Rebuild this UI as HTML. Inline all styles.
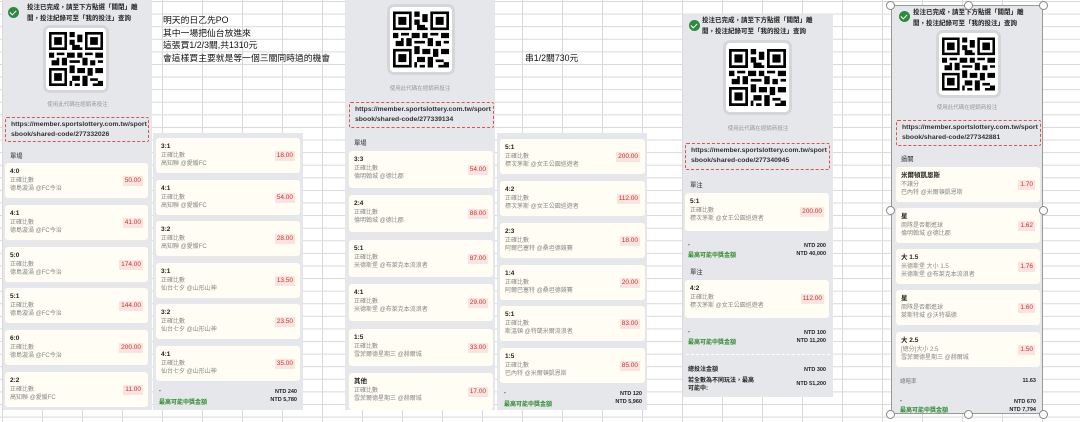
<!DOCTYPE html>
<html><head><meta charset="utf-8"><style>
*{margin:0;padding:0;box-sizing:border-box}
body{width:1080px;height:422px;overflow:hidden;position:relative;font-family:"Liberation Sans","Noto Sans CJK TC",sans-serif;background-color:#fff;
background-image:linear-gradient(90deg,#d9d9d9 1px,transparent 1px),linear-gradient(#d9d9d9 1px,transparent 1px);
background-size:40px 12.6px;background-position:2px 1px}
.p{position:absolute;background:#e6e7ea}
.c{position:absolute;background:#fffdf4;border-radius:3px;padding:5px 0 0 5px;font-size:6px;line-height:8.6px;color:#888}
.c b{display:block;color:#222;font-size:6.5px}
.c i{display:block;font-style:normal}
.c s{position:absolute;right:5px;top:50%;margin-top:-5px;text-decoration:none;background:#fbe3e1;color:#c0392b;font-size:6.5px;padding:1px 2px;line-height:8px}
.t{position:absolute;font-size:6.3px;color:#333}
.g{position:absolute;font-size:6px;color:#2e8b2e;font-weight:bold}
.n{position:absolute;font-size:5.5px;color:#222;font-weight:bold;text-align:right;line-height:7.5px}
.lk{position:absolute;border:1px dashed #d9534f;border-radius:2px;font-size:6.8px;font-weight:bold;color:#333;line-height:10px;padding:2px 5px;white-space:nowrap;overflow:hidden}
.hd{position:absolute;font-size:6.5px;font-weight:bold;color:#222;line-height:10.5px}
.ck{position:absolute;width:11px;height:11px;border-radius:50%;background:#2e8b3e}
.ck:after{content:"";position:absolute;left:3px;top:2px;width:3px;height:5px;border:solid #fff;border-width:0 1.5px 1.5px 0;transform:rotate(45deg)}
.qb{position:absolute;background:#fff;border:3px solid #d5d6da;border-radius:7px;padding:3px}
.qb svg{width:100%;height:100%;display:block}
.u{position:absolute;font-size:5.5px;color:#999;text-align:center}
.txt{position:absolute;font-size:8.8px;color:#111;line-height:12.6px}
.h{position:absolute;width:9px;height:9px;border-radius:50%;background:#fff;border:1px solid #888}
</style></head><body>
<svg width="0" height="0" style="position:absolute"><defs><symbol id="q" viewBox="0 0 21 21">
<path d="M0 0h7v7H0zM1 1v5h5V1zM2 2h3v3H2zM14 0h7v7h-7zM15 1v5h5V1zM16 2h3v3h-3zM0 14h7v7H0zM1 15v5h5v-5zM2 16h3v3H2z" fill-rule="evenodd"/>
<path d="M8 0h2v2H8zM11 1h2v3h-2zM8 3h2v2H8zM9 5h3v2H9zM0 8h2v2H0zM3 8h3v1H3zM7 8h3v2H7zM11 8h2v2h-2zM14 8h3v1h-3zM18 8h3v2h-3zM1 11h3v2H1zM5 10h2v3H5zM8 11h4v1H8zM13 10h2v3h-2zM16 11h2v2h-2zM19 11h2v1h-2zM8 13h2v3H8zM11 14h3v2h-3zM15 14h2v3h-2zM18 14h3v2h-3zM9 17h3v2H9zM13 17h2v4h-2zM16 18h3v1h-3zM19 19h2v2h-2zM8 19h1v2H8zM10 20h2v1h-2zM17 20h2v1h-2zM3 10h1v1H3zM12 6h1v1h-1z"/>
</symbol></defs></svg>

<div class="txt" style="left:163px;top:14px">明天的日乙先PO<br>其中一場把仙台放進來<br>這張買1/2/3關,共1310元<br>會這樣買主要就是等一個三關同時過的機會</div>
<div class="txt" style="left:525px;top:52px">串1/2關730元</div>

<div class="p" style="left:3px;top:0;width:149px;height:410px"></div>
<div class="ck" style="left:8px;top:7px"></div>
<div class="hd" style="left:27px;top:3px">投注已完成，請至下方點選「關閉」離<br>開，投注紀錄可至「我的投注」查詢</div>
<div class="qb" style="left:43px;top:25px;width:66px;height:68px"><svg><use href="#q"/></svg></div>
<div class="u" style="left:3px;top:100px;width:149px">使用此代碼在經銷商投注</div>
<div class="lk" style="left:5px;top:117px;width:144px;height:25px">https://member.sportslottery.com.tw/sport<br>sbook/shared-code/277332026</div>
<div class="t" style="left:10px;top:151px">單場</div>
<div class="c" style="left:5px;top:163px;width:143px;height:35px"><b>4:0</b><i>正確比數</i><i>德島漩渦 @FC今治</i><s>50.00</s></div>
<div class="c" style="left:5px;top:205px;width:143px;height:35px"><b>4:1</b><i>正確比數</i><i>德島漩渦 @FC今治</i><s>41.00</s></div>
<div class="c" style="left:5px;top:247px;width:143px;height:35px"><b>5:0</b><i>正確比數</i><i>德島漩渦 @FC今治</i><s>174.00</s></div>
<div class="c" style="left:5px;top:288px;width:143px;height:35px"><b>5:1</b><i>正確比數</i><i>德島漩渦 @FC今治</i><s>144.00</s></div>
<div class="c" style="left:5px;top:330px;width:143px;height:35px"><b>6:0</b><i>正確比數</i><i>德島漩渦 @FC今治</i><s>200.00</s></div>
<div class="c" style="left:5px;top:372px;width:143px;height:35px"><b>2:2</b><i>正確比數</i><i>高知聯 @愛媛FC</i><s>11.00</s></div>

<div class="p" style="left:153px;top:133px;width:150px;height:277px"></div>
<div class="c" style="left:156px;top:138px;width:144px;height:35px"><b>3:1</b><i>正確比數</i><i>高知聯 @愛媛FC</i><s>18.00</s></div>
<div class="c" style="left:156px;top:180px;width:144px;height:35px"><b>4:1</b><i>正確比數</i><i>高知聯 @愛媛FC</i><s>54.00</s></div>
<div class="c" style="left:156px;top:221px;width:144px;height:35px"><b>3:2</b><i>正確比數</i><i>高知聯 @愛媛FC</i><s>28.00</s></div>
<div class="c" style="left:156px;top:263px;width:144px;height:35px"><b>3:1</b><i>正確比數</i><i>仙台七夕 @山形山神</i><s>13.50</s></div>
<div class="c" style="left:156px;top:304px;width:144px;height:35px"><b>3:2</b><i>正確比數</i><i>仙台七夕 @山形山神</i><s>23.50</s></div>
<div class="c" style="left:156px;top:346px;width:144px;height:35px"><b>4:1</b><i>正確比數</i><i>仙台七夕 @山形山神</i><s>35.00</s></div>
<div class="n" style="left:159px;top:388px;text-align:left">-</div>
<div class="g" style="left:159px;top:397px">最高可能中獎金額</div>
<div class="n" style="left:240px;top:389px;width:57px">NTD 240<br>NTD 5,780</div>

<div class="p" style="left:345px;top:0;width:150px;height:410px"></div>
<div class="qb" style="left:387px;top:4px;width:68px;height:71px"><svg><use href="#q"/></svg></div>
<div class="u" style="left:345px;top:84px;width:150px">使用此代碼在經銷商投注</div>
<div class="lk" style="left:349px;top:102px;width:145px;height:26px">https://member.sportslottery.com.tw/sport<br>sbook/shared-code/277339134</div>
<div class="t" style="left:354px;top:138px">單場</div>
<div class="c" style="left:349px;top:151px;width:144px;height:37px"><b>3:3</b><i>正確比數</i><i>倫明翰城 @德比郡</i><s>54.00</s></div>
<div class="c" style="left:349px;top:195px;width:144px;height:37px"><b>2:4</b><i>正確比數</i><i>倫明翰城 @德比郡</i><s>88.00</s></div>
<div class="c" style="left:349px;top:240px;width:144px;height:37px"><b>5:1</b><i>正確比數</i><i>米德斯堡 @布萊克本流浪者</i><s>87.00</s></div>
<div class="c" style="left:349px;top:284px;width:144px;height:37px"><b>4:1</b><i>正確比數</i><i>米德斯堡 @布萊克本流浪者</i><s>29.00</s></div>
<div class="c" style="left:349px;top:329px;width:144px;height:37px"><b>1:5</b><i>正確比數</i><i>雪菲爾德星期三 @赫爾城</i><s>33.00</s></div>
<div class="c" style="left:349px;top:373px;width:144px;height:37px"><b>其他</b><i>正確比數</i><i>雪菲爾德星期三 @赫爾城</i><s>17.00</s></div>

<div class="p" style="left:497px;top:133px;width:150px;height:277px"></div>
<div class="c" style="left:500px;top:139px;width:145px;height:35px"><b>5:1</b><i>正確比數</i><i>標次茅斯 @女王公園巡遊者</i><s>200.00</s></div>
<div class="c" style="left:500px;top:181px;width:145px;height:35px"><b>4:2</b><i>正確比數</i><i>標次茅斯 @女王公園巡遊者</i><s>112.00</s></div>
<div class="c" style="left:500px;top:223px;width:145px;height:35px"><b>2:3</b><i>正確比數</i><i>阿爾巴塞特 @桑坦德競賽</i><s>18.00</s></div>
<div class="c" style="left:500px;top:265px;width:145px;height:35px"><b>1:4</b><i>正確比數</i><i>阿爾巴塞特 @桑坦德競賽</i><s>20.00</s></div>
<div class="c" style="left:500px;top:306px;width:145px;height:35px"><b>5:1</b><i>正確比數</i><i>斯溫頓 @特蘭米爾流浪者</i><s>83.00</s></div>
<div class="c" style="left:500px;top:348px;width:145px;height:35px"><b>1:5</b><i>正確比數</i><i>巴內特 @米爾頓凱恩斯</i><s>85.00</s></div>
<div class="n" style="left:504px;top:390px;text-align:left">-</div>
<div class="g" style="left:504px;top:399px">最高可能中獎金額</div>
<div class="n" style="left:584px;top:391px;width:58px">NTD 120<br>NTD 5,960</div>

<div class="p" style="left:683px;top:14px;width:150px;height:383px"></div>
<div class="ck" style="left:689px;top:20px"></div>
<div class="hd" style="left:702px;top:16px">投注已完成，請至下方點選「關閉」離<br>開，投注紀錄可至「我的投注」查詢</div>
<div class="qb" style="left:723px;top:40px;width:69px;height:75px"><svg><use href="#q"/></svg></div>
<div class="u" style="left:683px;top:124px;width:150px">使用此代碼在經銷商投注</div>
<div class="lk" style="left:685px;top:143px;width:145px;height:27px">https://member.sportslottery.com.tw/sport<br>sbook/shared-code/277340945</div>
<div class="t" style="left:690px;top:180px">單注</div>
<div class="c" style="left:685px;top:193px;width:144px;height:38px"><b>5:1</b><i>正確比數</i><i>標次茅斯 @女王公園巡遊者</i><s>200.00</s></div>
<div class="n" style="left:688px;top:242px;text-align:left">-</div>
<div class="g" style="left:688px;top:250px">最高可能中獎金額</div>
<div class="n" style="left:765px;top:243px;width:61px">NTD 200<br>NTD 40,000</div>
<div class="t" style="left:690px;top:267px">單注</div>
<div class="c" style="left:685px;top:280px;width:144px;height:38px"><b>4:2</b><i>正確比數</i><i>標次茅斯 @女王公園巡遊者</i><s>112.00</s></div>
<div class="n" style="left:688px;top:329px;text-align:left">-</div>
<div class="g" style="left:688px;top:337px">最高可能中獎金額</div>
<div class="n" style="left:765px;top:330px;width:61px">NTD 100<br>NTD 11,200</div>
<div style="position:absolute;left:686px;top:354px;width:144px;border-top:1px dashed #fff"></div>
<div class="n" style="left:688px;top:366px;text-align:left;font-size:6px;line-height:8px">總投注金額<br><span style="display:inline-block;margin-top:3px">若全數為不同玩法，最高<br>可能中:</span></div>
<div class="n" style="left:765px;top:367px;width:61px">NTD 300</div>
<div class="n" style="left:765px;top:381px;width:61px">NTD 51,200</div>

<div class="p" style="left:891px;top:5px;width:152px;height:409px;border:1px solid #999"></div>
<div class="ck" style="left:899px;top:11px"></div>
<div class="hd" style="left:913px;top:8px">投注已完成，請至下方點選「關閉」離<br>開，投注紀錄可至「我的投注」查詢</div>
<div class="qb" style="left:936px;top:30px;width:65px;height:68px"><svg><use href="#q"/></svg></div>
<div class="u" style="left:891px;top:103px;width:152px">使用此代碼在經銷商投注</div>
<div class="lk" style="left:896px;top:120px;width:145px;height:26px">https://member.sportslottery.com.tw/sport<br>sbook/shared-code/277342881</div>
<div class="t" style="left:901px;top:154px">過關</div>
<div class="c" style="left:896px;top:167px;width:144px;height:35px"><b>米爾頓凱恩斯</b><i>不讓分</i><i>巴內特 @米爾頓凱恩斯</i><s>1.70</s></div>
<div class="c" style="left:896px;top:208px;width:144px;height:35px"><b>星</b><i>兩隊是否都進球</i><i>倫明翰城 @德比郡</i><s>1.62</s></div>
<div class="c" style="left:896px;top:249px;width:144px;height:35px"><b>大 1.5</b><i>米德斯堡 大小 1.5</i><i>米德斯堡 @布萊克本流浪者</i><s>1.76</s></div>
<div class="c" style="left:896px;top:290px;width:144px;height:35px"><b>星</b><i>兩隊是否都進球</i><i>萊斯特城 @沃特福德</i><s>1.60</s></div>
<div class="c" style="left:896px;top:332px;width:144px;height:35px"><b>大 2.5</b><i>[總分]大小 2.5</i><i>雪菲爾德星期三 @赫爾城</i><s>1.50</s></div>
<div class="t" style="left:900px;top:377px;color:#777;font-size:5.5px">總賠率</div>
<div class="n" style="left:990px;top:378px;width:46px">11.63</div>
<div class="n" style="left:900px;top:398px;text-align:left">-</div>
<div class="g" style="left:900px;top:405px">最高可能中獎金額</div>
<div class="n" style="left:975px;top:399px;width:61px">NTD 670<br>NTD 7,794</div>
<div class="h" style="left:886px;top:1px"></div><div class="h" style="left:964px;top:1px"></div><div class="h" style="left:1039px;top:1px"></div>
<div class="h" style="left:886px;top:206px"></div><div class="h" style="left:1039px;top:206px"></div>
<div class="h" style="left:886px;top:410px"></div><div class="h" style="left:964px;top:410px"></div><div class="h" style="left:1039px;top:410px"></div>
</body></html>
